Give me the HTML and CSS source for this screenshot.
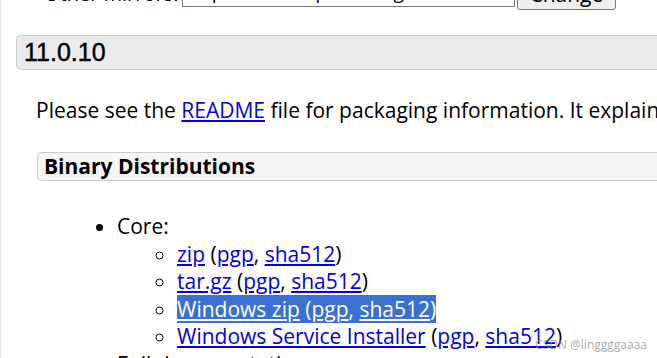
FILE: index.html
```html
<!DOCTYPE html>
<html lang="en">
<head>
    <meta charset="UTF-8">
    <meta name="viewport" content="width=device-width, initial-scale=1.0">
    <title>Apache Tomcat 11 Software Downloads</title>
    <link rel="stylesheet" href="styles.css">
</head>
<body>
    <div class="page">
        <form class="mirrors">
            <span class="mirrors-label">Other mirrors:</span>
            <input class="mirrors-input" type="text" value="https://dlcdn.apache.org/">
            <button class="mirrors-button" type="button">Change</button>
        </form>

        <h3 class="version">11.0.10</h3>

        <div class="section">
            <p>Please see the <a href="#">README</a> file for packaging information. It explains what every distribution contains.</p>

            <h4 class="subsection">Binary Distributions</h4>

            <ul class="dist-list">
                <li>Core:
                    <ul>
                        <li><a href="#">zip</a> (<a href="#">pgp</a>, <a href="#">sha512</a>)</li>
                        <li><a href="#">tar.gz</a> (<a href="#">pgp</a>, <a href="#">sha512</a>)</li>
                        <li><span class="selected"><a href="#">Windows zip</a> (<a href="#">pgp</a>, <a href="#">sha512</a>)</span></li>
                        <li><a href="#">Windows Service Installer</a> (<a href="#">pgp</a>, <a href="#">sha512</a>)</li>
                    </ul>
                </li>
                <li>Full documentation:
                    <ul>
                        <li><a href="#">tar.gz</a> (<a href="#">pgp</a>, <a href="#">sha512</a>)</li>
                    </ul>
                </li>
            </ul>
        </div>
    </div>

    <div class="watermark">CSDN @linggggaaaa</div>
</body>
</html>
```

FILE: styles.css
```css
body {
    font-family: "Open Sans", Arial, sans-serif;
    font-size: 21px;
    margin: 0;
    background-color: #fff;
    color: #000;
    overflow: hidden;
}
.page {
    border-left: 1px solid #e4e4e4;
    min-height: 100vh;
}
a {
    color: #0000ee;
}
.mirrors {
    display: flex;
    align-items: center;
    gap: 4px;
    margin: -23px 0 0 43px;
    height: 33px;
}
.mirrors-label {
    font-size: 20px;
}
.mirrors-input {
    width: 325px;
    height: 27px;
    font-family: "Open Sans", sans-serif;
    font-size: 19px;
    border: 1px solid #767676;
    padding: 0 3px;
    box-sizing: content-box;
    margin-top: -3px;
}
.mirrors-button {
    font-family: "Open Sans", sans-serif;
    font-size: 21px;
    padding: 1px 12px 1px 11px;
    border: 1px solid #767676;
    border-radius: 3px;
    background-color: #efefef;
    margin-left: -2px;
}
.version {
    font-family: "Liberation Sans", Arial, sans-serif;
    font-size: 25px;
    font-weight: normal;
    line-height: 28px;
    margin: 25px 0 0 15px;
    padding: 2px 7px 3px;
    background-color: #eaeaea;
    border: 1px solid #cccccc;
    border-right: none;
    border-radius: 5px 0 0 5px;
    -webkit-text-stroke: 0.4px #000;
}
.section {
    padding-left: 35px;
}
.section p {
    margin: 26px 0 0;
    white-space: nowrap;
}
.subsection {
    font-size: 21px;
    font-weight: bold;
    line-height: 27px;
    margin: 28px 0 0 1px;
    padding: 0 6px;
    background-color: #f5f5f5;
    border: 1px solid #cccccc;
    border-right: none;
    border-radius: 5px 0 0 5px;
}
.dist-list {
    margin: 32px 0 0;
    padding-left: 81px;
    line-height: 27.6px;
}
.dist-list ul {
    margin: 0;
    padding-left: 60px;
    list-style-type: circle;
}
.selected {
    background-color: #3a6fd3;
    color: #fff;
}
.selected a {
    color: #fff;
}
.watermark {
    position: absolute;
    right: 10px;
    bottom: 5px;
    font-family: "Open Sans", sans-serif;
    font-size: 12px;
    color: rgba(140, 140, 140, 0.75);
}
```
